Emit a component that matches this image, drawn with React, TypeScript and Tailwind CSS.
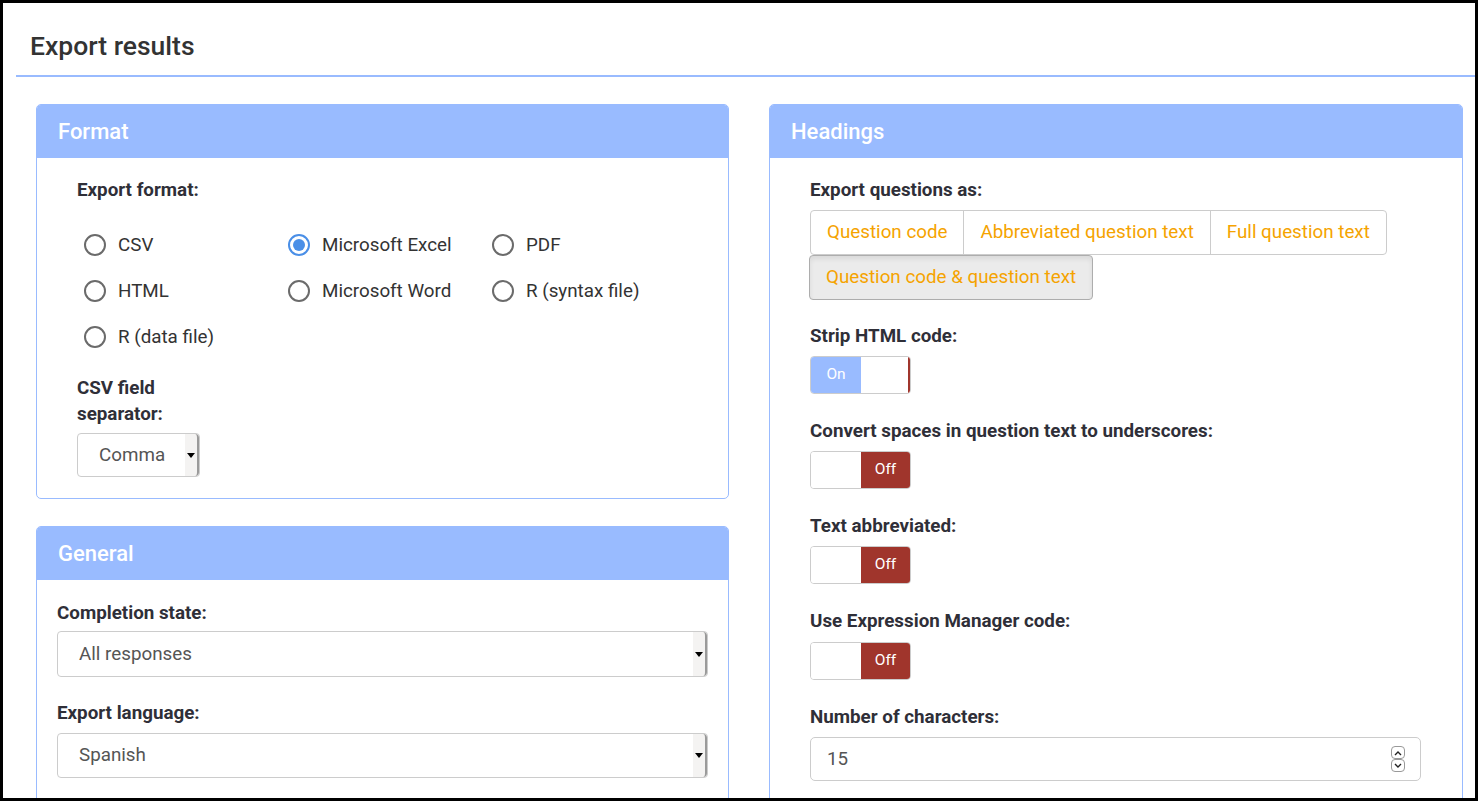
import React from "react";

const font = { fontFamily: "Roboto, 'Noto Sans', sans-serif" };

function Radio({ label, checked }: { label: string; checked?: boolean }) {
  return (
    <div className="flex items-center gap-[12px] h-[46px]">
      {checked ? (
        <span className="w-[22px] h-[22px] rounded-full border-2 border-[#4a8fe7] flex items-center justify-center">
          <span className="w-[12px] h-[12px] rounded-full bg-[#4a8fe7]" />
        </span>
      ) : (
        <span className="w-[22px] h-[22px] rounded-full border-2 border-[#6b6b6b]" />
      )}
      <span className="text-[18.8px] text-[#333]">{label}</span>
    </div>
  );
}

function SelectArrow() {
  return (
    <div className="w-[14px] self-stretch flex items-center justify-center bg-[#f4f3f2] border-r-2 border-[#9a9a9a] rounded-r-[4px]">
      <span className="w-0 h-0 border-l-[4px] border-r-[4px] border-t-[5px] border-l-transparent border-r-transparent border-t-black" />
    </div>
  );
}

function Toggle({ on }: { on: boolean }) {
  return (
    <div className="flex w-[101px] h-[38px] rounded-[4px] border border-[#ccc] overflow-hidden">
      {on ? (
        <>
          <div className="w-[50px] bg-[#99bbff] text-white text-[15.5px] flex items-center justify-center">On</div>
          <div className="flex-1 bg-white border-r-2 border-[#a0352c]" />
        </>
      ) : (
        <>
          <div className="w-[50px] bg-white" />
          <div className="flex-1 bg-[#a0352c] text-white text-[15.5px] flex items-center justify-center">Off</div>
        </>
      )}
    </div>
  );
}

function Panel({ title, children, className }: { title: string; children: React.ReactNode; className?: string }) {
  return (
    <div className={"border border-[#99bbff] rounded-[5px] overflow-hidden bg-white " + (className ?? "")}>
      <div className="h-[53px] bg-[#99bbff] flex items-center pl-[21px] text-white text-[22px] font-medium">{title}</div>
      {children}
    </div>
  );
}

const labelCls = "text-[18.8px] leading-[24px] font-bold text-[#2f2f38]";

export default function App() {
  return (
    <div style={font} className="w-[1478px] h-[801px] border-[3px] border-black bg-white overflow-hidden">
      <div className="ml-[13px] h-[74px] border-b-2 border-[#99bbff] flex items-center pl-[14px] pt-[14px]">
        <h1 className="text-[26.5px] leading-[32px] font-medium text-[#333]">Export results</h1>
      </div>
      <div className="flex gap-[40px] pl-[33px] pt-[27px]">
        <div className="w-[693px] flex flex-col gap-[27px]">
          <Panel title="Format">
            <div className="pl-[40px] pt-[22px] pb-[21px]">
              <div className={labelCls + " h-[20px] flex items-center"}>Export format:</div>
              <div className="grid grid-cols-[204px_204px_204px] pl-[7px] mt-[22px]">
                <Radio label="CSV" />
                <Radio label="Microsoft Excel" checked />
                <Radio label="PDF" />
                <Radio label="HTML" />
                <Radio label="Microsoft Word" />
                <Radio label="R (syntax file)" />
                <Radio label="R (data file)" />
              </div>
              <div className={labelCls + " !leading-[26px] mt-[15px] w-[120px]"}>
                CSV field
                <br />
                separator:
              </div>
              <div className="mt-[6px] w-[123px] h-[44px] border border-[#ccc] rounded-[4px] flex bg-white">
                <div className="flex-1 flex items-center pl-[21px] text-[18.8px] text-[#555]">Comma</div>
                <SelectArrow />
              </div>
            </div>
          </Panel>
          <Panel title="General" className="h-[300px]">
            <div className="pl-[20px] pr-[20px] pt-[21px]">
              <div className={labelCls}>Completion state:</div>
              <div className="mt-[6px] h-[46px] border border-[#ccc] rounded-[4px] flex">
                <div className="flex-1 flex items-center pl-[21px] text-[18.8px] text-[#555]">All responses</div>
                <SelectArrow />
              </div>
              <div className={labelCls + " mt-[24px]"}>Export language:</div>
              <div className="mt-[8px] h-[45px] border border-[#ccc] rounded-[4px] flex">
                <div className="flex-1 flex items-center pl-[21px] text-[18.8px] text-[#555]">Spanish</div>
                <SelectArrow />
              </div>
            </div>
          </Panel>
        </div>
        <div className="w-[694px]">
          <Panel title="Headings" className="h-[720px]">
            <div className="pl-[40px] pr-[41px] pt-[20px]">
              <div className={labelCls}>Export questions as:</div>
              <div className="mt-[8px] flex">
                <div className="flex border border-[#ccc] rounded-[4px] h-[45px] text-[18.8px] text-[#f5a300]">
                  <div className="px-[16px] flex items-center">Question code</div>
                  <div className="px-[16px] flex items-center border-l border-[#ccc]">Abbreviated question text</div>
                  <div className="px-[16px] flex items-center border-l border-[#ccc]">Full question text</div>
                </div>
              </div>
              <div className="-ml-px">
                <div className="inline-flex h-[45px] px-[16px] items-center text-[18.8px] text-[#f5a300] bg-[#ebebeb] border border-[#adadad] rounded-[4px] shadow-[inset_0_3px_5px_rgba(0,0,0,0.08)]">
                  Question code &amp; question text
                </div>
              </div>
              <div className={labelCls + " mt-[24px]"}>Strip HTML code:</div>
              <div className="mt-[8px]"><Toggle on /></div>
              <div className={labelCls + " mt-[25px]"}>Convert spaces in question text to underscores:</div>
              <div className="mt-[8px]"><Toggle on={false} /></div>
              <div className={labelCls + " mt-[25px]"}>Text abbreviated:</div>
              <div className="mt-[8px]"><Toggle on={false} /></div>
              <div className={labelCls + " mt-[25px]"}>Use Expression Manager code:</div>
              <div className="mt-[9px]"><Toggle on={false} /></div>
              <div className={labelCls + " mt-[25px]"}>Number of characters:</div>
              <div className="mt-[8px] h-[44px] border border-[#ccc] rounded-[5px] flex items-center pl-[16px] pr-[15px]">
                <span className="flex-1 text-[18.8px] text-[#555]">15</span>
                <div className="flex flex-col">
                  <span className="w-[14px] h-[13px] border border-[#999] rounded-[4px] flex items-center justify-center">
                    <svg width="8" height="6" viewBox="0 0 8 6"><path d="M1 5 L4 2 L7 5" fill="none" stroke="#222" strokeWidth="1.4" /></svg>
                  </span>
                  <span className="w-[14px] h-[13px] border border-[#999] rounded-[4px] flex items-center justify-center">
                    <svg width="8" height="6" viewBox="0 0 8 6"><path d="M1 1 L4 4 L7 1" fill="none" stroke="#222" strokeWidth="1.4" /></svg>
                  </span>
                </div>
              </div>
            </div>
          </Panel>
        </div>
      </div>
    </div>
  );
}
